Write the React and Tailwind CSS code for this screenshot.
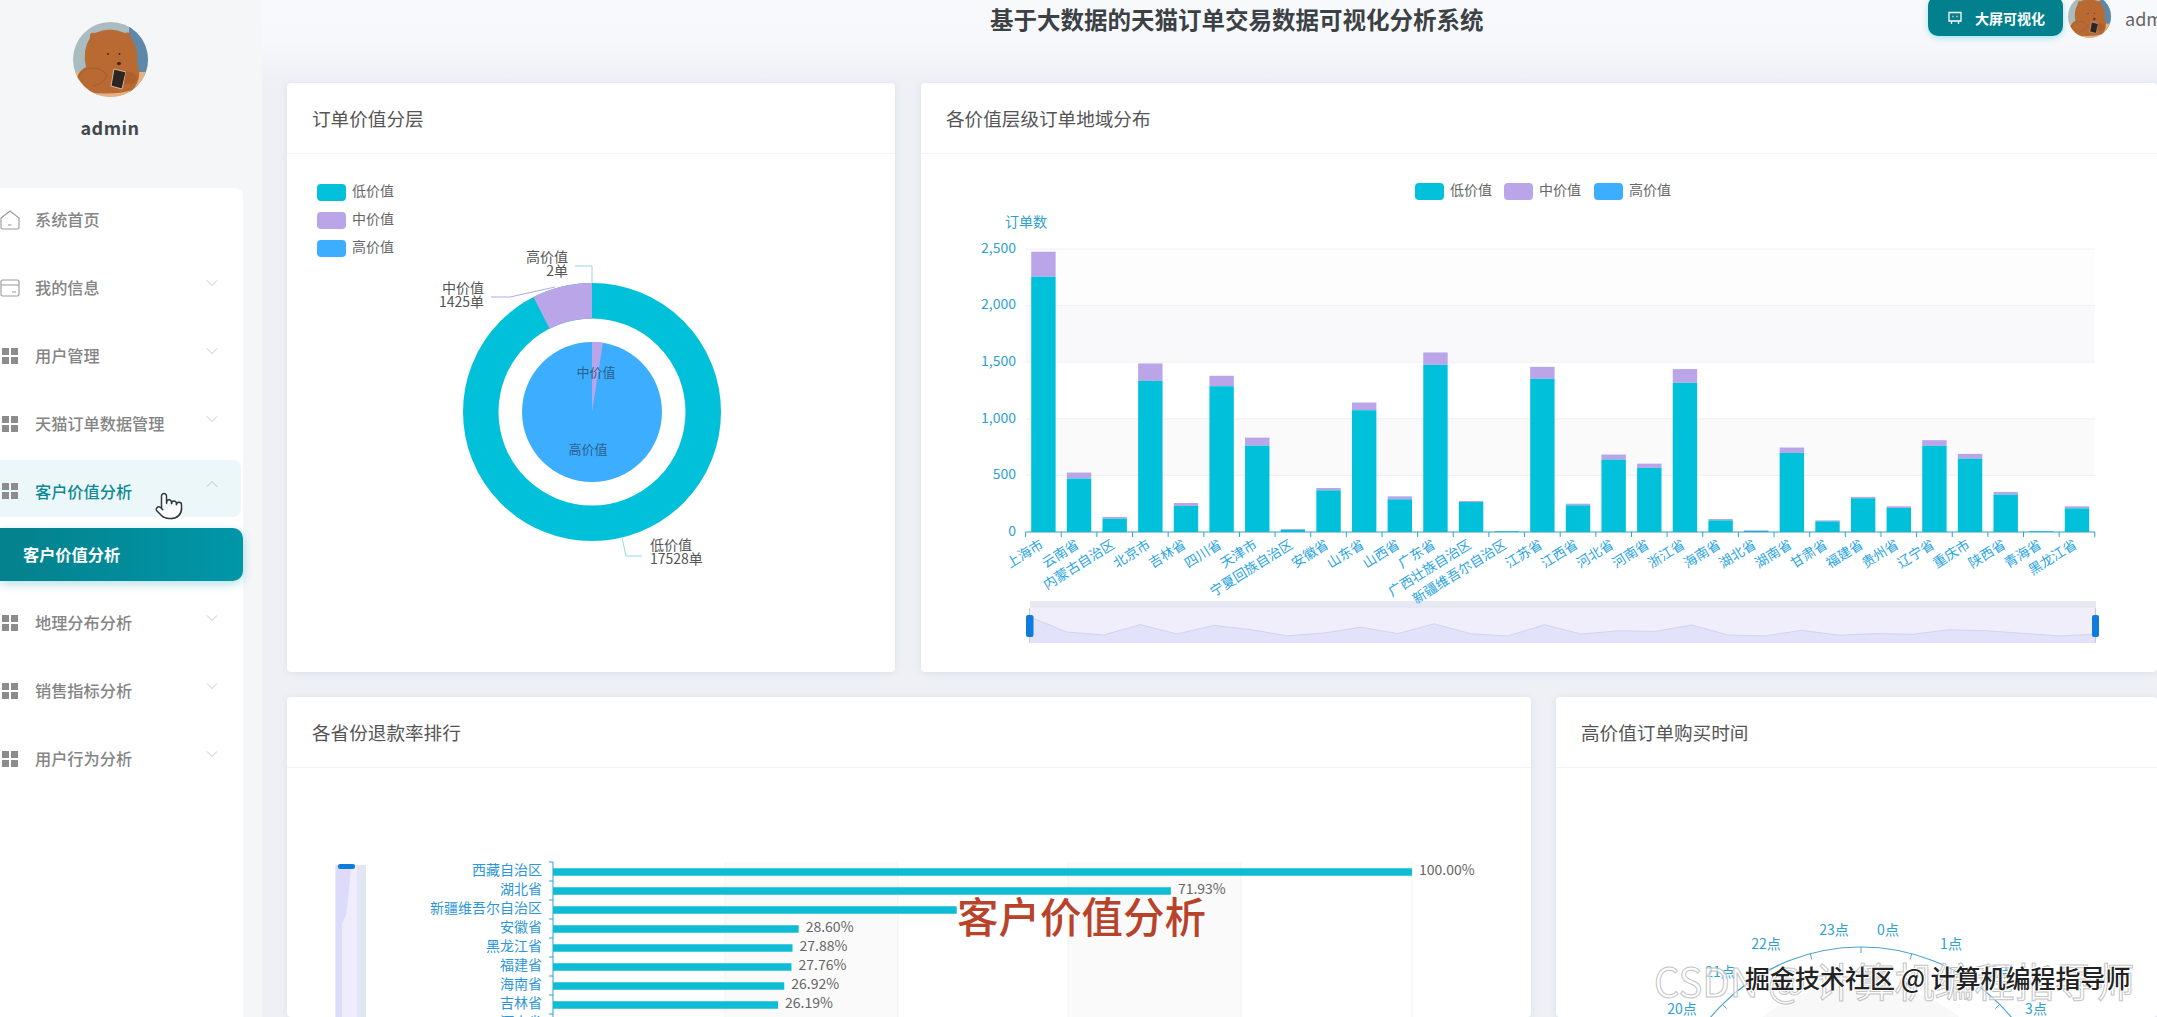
import React from 'react';
import { ChevronDown, ChevronUp, Pointer } from 'lucide-react';

const TEAL = '#00c1d9';
const PURPLE = '#b9a5e8';
const BLUE = '#3dadff';
const AXIS_TEXT = '#2d9fd0';
const CATEGORY_TEXT = '#2ba4e4';

// [province, total orders, low value orders]
const PROVINCES = [
  ['上海市', 2476, 2255], ['云南省', 525, 472], ['内蒙古自治区', 133, 118], ['北京市', 1489, 1335],
  ['吉林省', 256, 230], ['四川省', 1380, 1288], ['天津市', 834, 763], ['宁夏回族自治区', 27, 20],
  ['安徽省', 389, 368], ['山东省', 1144, 1076], ['山西省', 315, 289], ['广东省', 1586, 1477],
  ['广西壮族自治区', 274, 265], ['新疆维吾尔自治区', 9, 6], ['江苏省', 1459, 1353], ['江西省', 250, 236],
  ['河北省', 684, 640], ['河南省', 604, 566], ['浙江省', 1439, 1318], ['海南省', 115, 103],
  ['湖北省', 15, 9], ['湖南省', 746, 699], ['甘肃省', 103, 94], ['福建省', 310, 298],
  ['贵州省', 227, 212], ['辽宁省', 811, 761], ['重庆市', 690, 649], ['陕西省', 354, 330],
  ['青海省', 9, 6], ['黑龙江省', 227, 209]
];

const REFUNDS = [
  ['西藏自治区', 100, '100.00%'], ['湖北省', 71.93, '71.93%'], ['新疆维吾尔自治区', 47, ''],
  ['安徽省', 28.6, '28.60%'], ['黑龙江省', 27.88, '27.88%'], ['福建省', 27.76, '27.76%'],
  ['海南省', 26.92, '26.92%'], ['吉林省', 26.19, '26.19%'], ['河南省', 25.6, '']
];

const HOURS = [
  ['23点', 1834, 931], ['0点', 1888, 931], ['22点', 1766, 945], ['1点', 1951, 945],
  ['21点', 1720, 973], ['2点', 2002, 973], ['20点', 1682, 1010], ['3点', 2036, 1010]
];

const TOP_MENU = [
  { label: '系统首页', icon: 'home' },
  { label: '我的信息', icon: 'card', arrow: true },
  { label: '用户管理', icon: 'grid', arrow: true },
  { label: '天猫订单数据管理', icon: 'grid', arrow: true }
];
const BOTTOM_MENU = ['地理分布分析', '销售指标分析', '用户行为分析'];

function Bear({ className, clipId }) {
  return (
    <svg viewBox="0 0 75 75" className={className}>
      <defs>
        <clipPath id={clipId}><circle cx="37.5" cy="37.5" r="37.5" /></clipPath>
      </defs>
      <g clipPath={`url(#${clipId})`}>
        <rect width="75" height="75" fill="#a9bcc0" />
        <rect x="56" width="19" height="75" fill="#5d88a9" />
        <rect y="50" width="75" height="25" fill="#e8b183" />
        <path d="M17 16 Q16 10 22 11 Q37 4 52 11 Q58 9 58 16 Q66 26 64 42 Q70 54 60 68 Q40 74 14 70 Q4 66 3 58 Q6 48 13 45 Q9 28 17 16 Z" fill="#b96a33" />
        <path d="M5 56 Q10 46 19 46 Q29 46 34 53 Q31 62 20 64" fill="none" stroke="#98562a" strokeWidth="0.7" />
        <path d="M41 47 L53 50 L49 67 L38 64 Z" fill="#2e2522" stroke="#e3d6c8" strokeWidth="0.8" />
        <path d="M53 49 Q63 50 64 57 Q62 64 51 62 Z" fill="#ad5f2c" />
        <circle cx="35" cy="32" r="0.9" fill="#3a2114" />
        <circle cx="46.5" cy="32" r="0.9" fill="#3a2114" />
        <ellipse cx="46" cy="41.5" rx="2" ry="1.6" fill="#4a1a10" />
      </g>
    </svg>
  );
}

function MenuIcon({ type }) {
  if (type === 'home') {
    return (
      <svg viewBox="0 0 20 20" className="w-5 h-5 text-[#999]" fill="none" stroke="currentColor" strokeWidth="1.1">
        <path d="M1 8 L10 1 L19 8 V17.5 Q19 19 17.5 19 H2.5 Q1 19 1 17.5 Z" />
        <path d="M8 15 H11.5" />
      </svg>
    );
  }
  if (type === 'card') {
    return (
      <svg viewBox="0 0 20 20" className="w-5 h-5 text-[#999]" fill="none" stroke="currentColor" strokeWidth="1.1">
        <rect x="1" y="2" width="18" height="16" rx="1.5" />
        <path d="M1 7 H19 M12 14 H16" />
      </svg>
    );
  }
  return (
    <svg viewBox="0 0 20 20" className="w-5 h-5 text-[#8c8c8c]" fill="currentColor">
      <rect x="2" y="2" width="7" height="7" />
      <rect x="11" y="2" width="7" height="7" />
      <rect x="2" y="11" width="7" height="7" />
      <rect x="11" y="11" width="7" height="7" />
    </svg>
  );
}

function MenuItem({ label, icon, arrow }) {
  return (
    <div className="flex items-center h-[68px] text-[16.2px] font-medium text-[#858585]">
      <div className="w-[35px]"><MenuIcon type={icon} /></div>
      <span className="-mt-[2px]">{label}</span>
      {arrow && <ChevronDown size={20} strokeWidth={1} className="ml-auto mr-[21px] -mt-[10px] text-[#b8bcc4]" />}
    </div>
  );
}

function Sidebar() {
  return (
    <aside className="w-[262px] shrink-0 bg-[#f4f6f8] flex flex-col relative">
      <div className="h-[188px] flex flex-col items-center w-[220px]">
        <Bear className="w-[75px] h-[75px] mt-[22px]" clipId="bear-side" />
        <div className="mt-[17px] text-[18px] leading-[26px] font-bold tracking-[0.5px] text-[#44484c]">admin</div>
      </div>
      <div className="w-[243px] flex-1 bg-white rounded-tr-lg">
        <div className="-mt-[2px]">
          {TOP_MENU.map(item => <MenuItem key={item.label} {...item} />)}
        </div>
        <div className="mt-[2px] h-[57px] w-[241px] pt-[5px] flex items-center rounded-r-lg bg-[#ecf7f9] text-[16.2px] font-medium text-[#0e8a95]">
          <div className="w-[35px]"><MenuIcon type="grid" /></div>
          <span>客户价值分析</span>
          <ChevronUp size={20} strokeWidth={1} className="ml-auto mr-[19px] -mt-[14px] text-[#b8bcc4]" />
        </div>
        <div className="mt-[11px] h-[53px] pl-[23px] flex items-center rounded-r-[10px] bg-gradient-to-r from-[#04818c] to-[#0097a9] text-[16.2px] font-bold text-white shadow-[0_3px_10px_rgba(0,151,169,0.3)]">
          <span className="-mt-[1px]">客户价值分析</span>
        </div>
        <div className="mt-[8px]">
          {BOTTOM_MENU.map(label => <MenuItem key={label} label={label} icon="grid" arrow />)}
        </div>
      </div>
      <Pointer size={30} strokeWidth={1.2} className="absolute left-[154px] top-[491px] text-[#33383c] fill-white" />
    </aside>
  );
}

function Header() {
  return (
    <header className="h-[83px] shrink-0 flex items-start justify-between bg-gradient-to-b from-[#f8f9fb] via-[#f7f8fb] to-[#eef0f6]">
      <h1 className="ml-[728px] mt-[2px] text-[23.5px] leading-[34px] font-bold text-[#3c4145] whitespace-nowrap">
        基于大数据的天猫订单交易数据可视化分析系统
      </h1>
      <div className="w-[229px] shrink-0 flex items-start">
        <button className="w-[135px] h-[40px] -mt-[4px] pt-[4px] shrink-0 flex items-center pl-[19px] gap-[12px] rounded-[10px] bg-[#03808e] text-white text-[14px] font-bold shadow-[0_2px_6px_rgba(0,190,210,0.35)]">
          <svg viewBox="0 0 16 16" className="w-4 h-4" fill="none" stroke="currentColor" strokeWidth="1.3">
            <path d="M2 2.5 H14 V11 H2 Z M4.5 11 V14 M11.5 11 V14" />
            <path d="M5.5 6.5 H6.5 M9.5 6.5 H10.5" strokeWidth="1.6" />
          </svg>
          大屏可视化
        </button>
        <Bear className="w-[43px] h-[43px] shrink-0 ml-[5px] -mt-[5px]" clipId="bear-top" />
        <span className="ml-[14px] w-[32px] overflow-hidden text-[18px] leading-[36px] text-[#666]">admin</span>
      </div>
    </header>
  );
}

function Card({ title, className, children }) {
  return (
    <section className={`bg-white rounded-[4px] shadow-[0_1px_6px_rgba(170,175,200,0.25)] overflow-hidden ${className}`}>
      <div className="h-[71px] pl-[25px] flex items-center border-b border-[#f1f2f4] text-[18.6px] text-[#555]">{title}</div>
      {children}
    </section>
  );
}

function Legend({ x, y, color, label }) {
  return (
    <g>
      <rect x={x} y={y} width="29" height="17" rx="4" fill={color} />
      <text x={x + 35} y={y + 8.5} fontSize="14" fill="#666" dominantBaseline="middle">{label}</text>
    </g>
  );
}

function arcPoint(cx, cy, r, deg) {
  const a = (deg * Math.PI) / 180;
  return [cx + r * Math.sin(a), cy - r * Math.cos(a)];
}

function ValuePie() {
  const cx = 592;
  const cy = 412;
  const [ox, oy] = arcPoint(cx, cy, 129, -27);
  const [ix, iy] = arcPoint(cx, cy, 93.5, -27);
  const [px, py] = arcPoint(cx, cy, 70, 9);
  return (
    <svg width="608" height="517" viewBox="287 154 608 517">
      <Legend x={317} y={184} color={TEAL} label="低价值" />
      <Legend x={317} y={212} color={PURPLE} label="中价值" />
      <Legend x={317} y={240} color={BLUE} label="高价值" />

      <circle cx={cx} cy={cy} r="111.25" fill="none" stroke={TEAL} strokeWidth="35.5" />
      <path d={`M${cx} ${cy - 129} A129 129 0 0 0 ${ox} ${oy} L${ix} ${iy} A93.5 93.5 0 0 1 ${cx} ${cy - 93.5} Z`} fill={PURPLE} />
      <circle cx={cx} cy={cy} r="70" fill={BLUE} />
      <path d={`M${cx} ${cy} L${cx} ${cy - 70} A70 70 0 0 1 ${px} ${py} Z`} fill={PURPLE} />

      <path d="M575 266 H592 V283" fill="none" stroke="#9ccfd8" strokeWidth="1" />
      <path d="M491 297 H510 L555 287" fill="none" stroke={PURPLE} strokeWidth="1" />
      <path d="M622 538 L626 556 H642" fill="none" stroke="#8fdbe2" strokeWidth="1" />

      <g fontSize="14" fill="#555" dominantBaseline="middle">
        <text x="568" y="258" textAnchor="end">高价值</text>
        <text x="568" y="272" textAnchor="end">2单</text>
        <text x="484" y="289" textAnchor="end">中价值</text>
        <text x="484" y="303" textAnchor="end">1425单</text>
        <text x="650" y="546">低价值</text>
        <text x="650" y="560">17528单</text>
      </g>
      <g fontSize="13" fill="#2b5f8c" textAnchor="middle" dominantBaseline="middle">
        <text x="596" y="373">中价值</text>
        <text x="588" y="450">高价值</text>
      </g>
    </svg>
  );
}

function OrdersBarChart() {
  const left = 1025.6;
  const step = 35.64;
  const base = 532;
  const unit = 283 / 2500;
  const zoomX = i => 1030 + (i * 1066) / 29;
  const zoomY = v => 636 - (v / 2476) * 19;
  const line = PROVINCES.map((p, i) => `${zoomX(i).toFixed(1)} ${zoomY(p[1]).toFixed(1)}`).join(' L');
  return (
    <svg width="1236" height="518" viewBox="921 154 1236 518">
      <Legend x={1415} y={183} color={TEAL} label="低价值" />
      <Legend x={1504} y={183} color={PURPLE} label="中价值" />
      <Legend x={1594} y={183} color={BLUE} label="高价值" />

      <text x="1026" y="223" fontSize="14" fill={AXIS_TEXT} textAnchor="middle" dominantBaseline="middle">订单数</text>

      <rect x={left} y="249" width="1069" height="56.6" fill="#fdfdfd" />
      <rect x={left} y="305.6" width="1069" height="56.6" fill="#f9f9fb" />
      <rect x={left} y="418.8" width="1069" height="56.6" fill="#fafafb" />
      {[0, 1, 2, 3, 4].map(i => (
        <g key={i}>
          <path d={`M${left} ${249 + i * 56.6} H2095`} stroke="#f0f0f2" />
          <text x="1016" y={249 + i * 56.6} fontSize="14" fill={AXIS_TEXT} textAnchor="end" dominantBaseline="middle">
            {['2,500', '2,000', '1,500', '1,000', '500'][i]}
          </text>
        </g>
      ))}
      <text x="1016" y={base} fontSize="14" fill={AXIS_TEXT} textAnchor="end" dominantBaseline="middle">0</text>

      {PROVINCES.map(([name, total, low], i) => {
        const cx = left + step * (i + 0.5);
        return (
          <g key={name}>
            <rect x={cx - 12.2} y={base - total * unit} width="24.4" height={(total - low) * unit} fill={PURPLE} />
            <rect x={cx - 12.2} y={base - low * unit} width="24.4" height={low * unit} fill={TEAL} />
          </g>
        );
      })}

      <path d={`M${left} ${base} H2095`} stroke="#2aa5c8" strokeWidth="1.2" />
      {Array.from({ length: 31 }, (_, i) => (
        <path key={i} d={`M${left + step * i} ${base} v5`} stroke="#2aa5c8" />
      ))}

      <rect x="1030" y="601" width="1066" height="42" fill="#f0eefb" />
      <rect x="1030" y="601" width="1066" height="7" fill="#e6e8f3" />
      <path d={`M${line} L2096 643 L1030 643 Z`} fill="#e2e2fa" />
      <path d={`M${line}`} fill="none" stroke="#d3d3f0" />
      <path d="M1029.5 608 V643 M2095.5 608 V643" stroke="#c9c9dc" />
      <rect x="1026" y="615" width="7.5" height="22" rx="2" fill="#0f7bdc" />
      <rect x="2092" y="615" width="7" height="22" rx="2" fill="#0f7bdc" />

      {PROVINCES.map(([name], i) => {
        const cx = left + step * (i + 0.5);
        return (
          <text key={name} x={cx + 1} y="547" fontSize="13.5" fill={CATEGORY_TEXT} textAnchor="end" transform={`rotate(-32 ${cx + 1} 547)`}>
            {name}
          </text>
        );
      })}
    </svg>
  );
}

function RefundChart() {
  const axis = 553;
  return (
    <svg width="1243" height="249" viewBox="287 768 1243 249">
      <rect x="725" y="862" width="173" height="155" fill="#fafafa" />
      <rect x="1068" y="862" width="173" height="155" fill="#fafafa" />
      {[725, 898, 1068, 1241, 1412].map(x => (
        <path key={x} d={`M${x} 862 V1017`} stroke="#f3f3f4" />
      ))}

      <rect x="335.5" y="865" width="30.5" height="152" fill="#efedfb" />
      <rect x="357" y="865" width="9" height="152" fill="#e3e5f2" />
      <path d="M335.5 865 H351 Q349 895 346 915 L342 924 V1017 H335.5 Z" fill="#dcdcfa" />
      <rect x="338" y="864" width="17" height="5" rx="2" fill="#0f7bdc" />

      <path d={`M${axis} 862 V1017`} stroke="#2aa5c8" />
      {REFUNDS.map(([name, value, text], i) => {
        const y = 872 + i * 19;
        return (
          <g key={name}>
            <path d={`M${axis} ${y - 10} h-4`} stroke="#2aa5c8" />
            <text x="542" y={y - 1} fontSize="14" fill="#2d96d8" textAnchor="end" dominantBaseline="middle">{name}</text>
            <rect x={axis} y={y - 3.75} width={value * 8.59} height="7.5" fill="#0fbcd5" />
            {text && <text x={axis + value * 8.59 + 7} y={y - 1} fontSize="14" fill="#666" dominantBaseline="middle">{text}</text>}
          </g>
        );
      })}
    </svg>
  );
}

function HourChart() {
  const cx = 1861;
  const cy = 1143;
  const ticks = [-75, -60, -45, -30, -15, 0, 15, 30, 45, 60, 75];
  return (
    <svg width="601" height="249" viewBox="1556 768 601 249">
      <circle cx={cx} cy={cy} r="160" fill="#f8f8f8" />
      <circle cx={cx} cy={cy} r="196" fill="none" stroke="#4aa5cc" strokeWidth="1.2" />
      {ticks.map(deg => {
        const [x1, y1] = arcPoint(cx, cy, 196, deg);
        const [x2, y2] = arcPoint(cx, cy, 190, deg);
        return <path key={deg} d={`M${x1} ${y1} L${x2} ${y2}`} stroke="#4aa5cc" />;
      })}
      {HOURS.map(([label, x, y]) => (
        <text key={label} x={x} y={y} fontSize="14" fill={AXIS_TEXT} textAnchor="middle" dominantBaseline="middle">{label}</text>
      ))}
    </svg>
  );
}

export default function App() {
  return (
    <div className="relative w-[2157px] h-[1017px] overflow-hidden flex bg-[#eef0f6] font-['Noto_Sans_CJK_SC','Noto_Sans',sans-serif]">
      <Sidebar />
      <main className="flex-1 min-w-0 flex flex-col">
        <Header />
        <div className="flex gap-[26px] pl-[25px] h-[589px] shrink-0">
          <Card title="订单价值分层" className="w-[608px] shrink-0"><ValuePie /></Card>
          <Card title="各价值层级订单地域分布" className="flex-1 min-w-0"><OrdersBarChart /></Card>
        </div>
        <div className="flex gap-[25px] pl-[25px] mt-[25px] flex-1 min-h-0">
          <Card title="各省份退款率排行" className="w-[1244px] shrink-0"><RefundChart /></Card>
          <Card title="高价值订单购买时间" className="flex-1 min-w-0"><HourChart /></Card>
        </div>
      </main>

      {/* video captions burned into the recording */}
      <div className="absolute left-[957px] top-[885px] text-[41.5px] leading-[60px] font-medium text-[#b8432a] whitespace-nowrap [text-shadow:0_0_3px_#fff]">
        客户价值分析
      </div>
      <div className="absolute left-[1654px] top-[950px] text-[40px] leading-[60px] text-white/60 [-webkit-text-stroke:1px_#c4c4c4] whitespace-nowrap">
        CSDN @ 计算机编程指导师
      </div>
      <div className="absolute left-[1745px] top-[959px] text-[25px] leading-[36px] font-medium text-[#222] [text-shadow:1px_1px_0_#fff,-1px_-1px_0_#fff] whitespace-nowrap">
        掘金技术社区 @ 计算机编程指导师
      </div>
    </div>
  );
}
